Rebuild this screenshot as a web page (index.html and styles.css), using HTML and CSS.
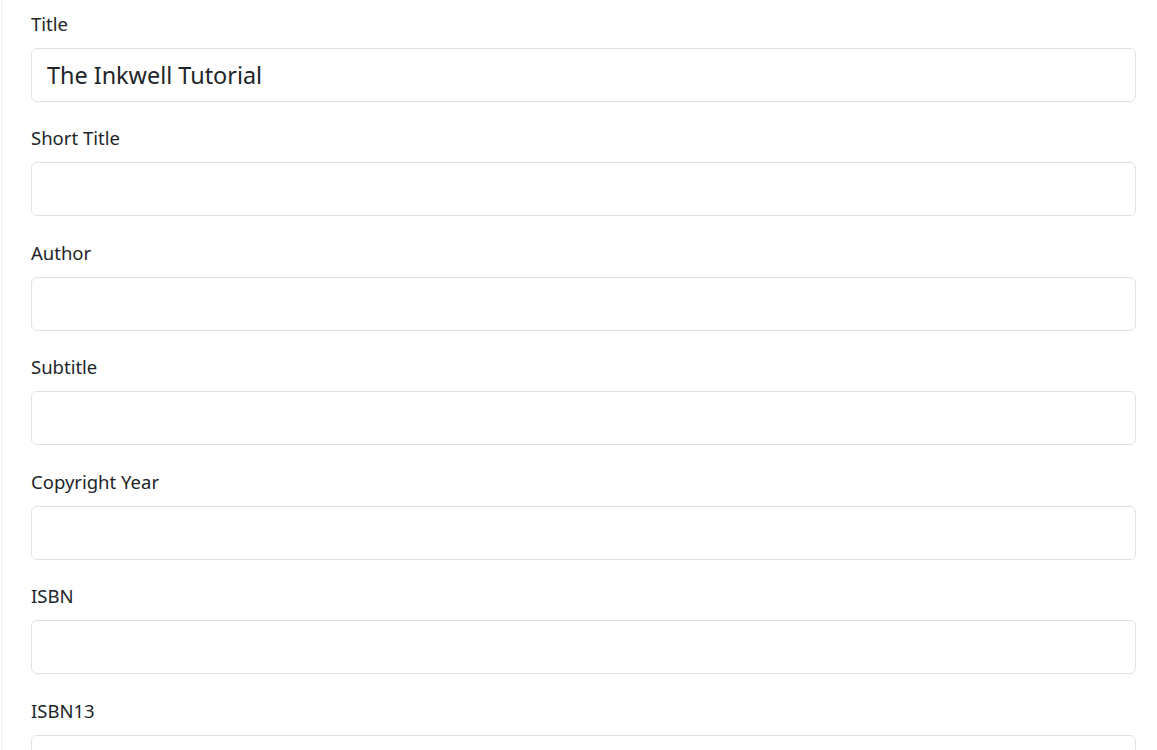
FILE: index.html
```html
<!DOCTYPE html>
<html lang="en">
<head>
<meta charset="utf-8">
<title>Book Details</title>
<link rel="stylesheet" href="styles.css">
</head>
<body>
<div class="page">
  <form class="book-form">
    <div class="field">
      <label class="field-label" for="title">Title</label>
      <input class="field-input" id="title" type="text" value="The Inkwell Tutorial">
    </div>
    <div class="field">
      <label class="field-label" for="short-title">Short Title</label>
      <input class="field-input" id="short-title" type="text">
    </div>
    <div class="field">
      <label class="field-label" for="author">Author</label>
      <input class="field-input" id="author" type="text">
    </div>
    <div class="field">
      <label class="field-label" for="subtitle">Subtitle</label>
      <input class="field-input" id="subtitle" type="text">
    </div>
    <div class="field">
      <label class="field-label" for="year">Copyright Year</label>
      <input class="field-input" id="year" type="text">
    </div>
    <div class="field">
      <label class="field-label" for="isbn">ISBN</label>
      <input class="field-input" id="isbn" type="text">
    </div>
    <div class="field">
      <label class="field-label" for="isbn13">ISBN13</label>
      <input class="field-input" id="isbn13" type="text">
    </div>
  </form>
</div>
</body>
</html>
```

FILE: styles.css
```css
html, body {
  margin: 0;
  padding: 0;
  background: #ffffff;
  height: 100%;
  overflow: hidden;
}

body {
  font-family: "Noto Sans", "Open Sans", sans-serif;
  color: #212529;
}

.page {
  margin-left: 1px;
  border-left: 1px solid #eeeeee;
  padding: 10px 21px 0 29px;
  min-height: 100%;
  box-sizing: border-box;
}

.book-form {
  display: flex;
  flex-direction: column;
  gap: 22.45px;
}

.field {
  display: flex;
  flex-direction: column;
}

.field-label {
  font-size: 18.5px;
  line-height: 27px;
  margin-bottom: 11px;
}

.field-input {
  display: block;
  box-sizing: border-box;
  width: 100%;
  height: 54px;
  padding: 0 15px;
  font-family: inherit;
  font-size: 23.4px;
  color: #212529;
  background: #ffffff;
  border: 1px solid #dee2e6;
  border-radius: 6px;
  outline: none;
}
```
